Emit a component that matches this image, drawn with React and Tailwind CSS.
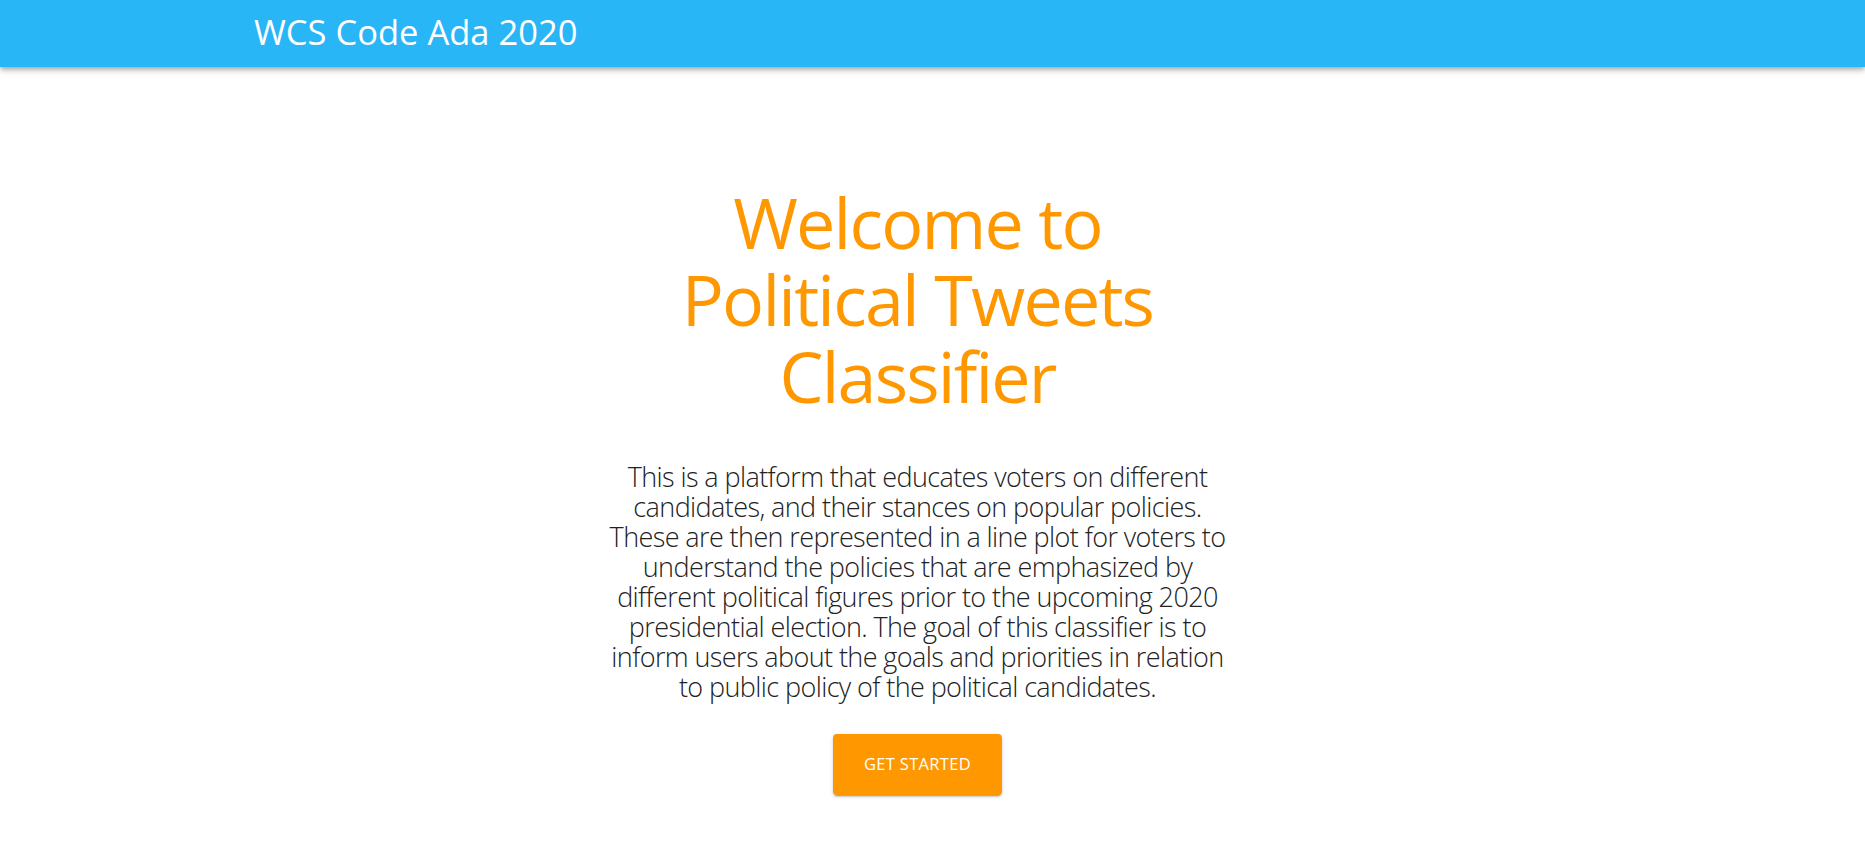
import React from "react";

const lines = [
  "This is a platform that educates voters on different",
  "candidates, and their stances on popular policies.",
  "These are then represented in a line plot for voters to",
  "understand the policies that are emphasized by",
  "different political figures prior to the upcoming 2020",
  "presidential election. The goal of this classifier is to",
  "inform users about the goals and priorities in relation",
  "to public policy of the political candidates.",
];

export default function App() {
  return (
    <div className="min-h-[862px] bg-white font-['Open_Sans','Noto_Sans',sans-serif]">
      <header className="h-[67px] bg-[#29b6f6] flex items-center pl-[254px] pb-[3px] shadow-[0_2px_4px_-1px_rgba(0,0,0,0.2),0_4px_5px_0_rgba(0,0,0,0.14),0_1px_10px_0_rgba(0,0,0,0.12)] relative">
        <h1 className="text-white text-[34.5px] leading-[1.2] font-normal">WCS Code Ada 2020</h1>
      </header>
      <main className="w-[1835px] flex flex-col items-center">
        <h2 className="mt-[117px] text-[#ff9800] text-[70px] leading-[77px] tracking-[-1.8px] font-normal text-center">
          Welcome to
          <br />
          Political Tweets
          <br />
          Classifier
        </h2>
        <p className="mt-[47px] text-[#222222] text-[27px] leading-[30px] font-light text-center tracking-[-0.6px]">
          {lines.map((l, i) => (
            <React.Fragment key={i}>
              {l}
              {i < lines.length - 1 && <br />}
            </React.Fragment>
          ))}
        </p>
        <button className="mt-[32px] w-[169px] h-[61px] bg-[#ff9800] text-white text-[16.5px] tracking-[0.3px] uppercase rounded-[4px] shadow-[0_3px_1px_-2px_rgba(0,0,0,0.2),0_2px_2px_0_rgba(0,0,0,0.14),0_1px_5px_0_rgba(0,0,0,0.12)]">
          Get Started
        </button>
      </main>
    </div>
  );
}
